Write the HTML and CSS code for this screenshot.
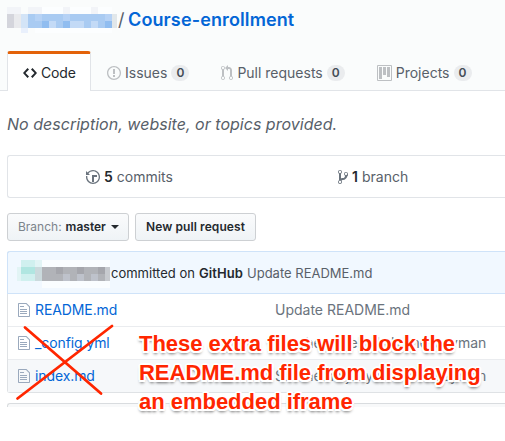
FILE: index.html
```html
<!DOCTYPE html>
<html lang="en">
<head>
<meta charset="utf-8">
<title>Course-enrollment</title>
<link rel="stylesheet" href="styles.css">
</head>
<body>
<header class="head">
  <h1 class="repo">
    <svg class="owner" width="110" height="28" shape-rendering="crispEdges">
      <path fill="#f2f4f8" d="M0 0h14v7H0zM21 0h14v7H21zM56 0h7v7h-7zM84 0h7v7h-7zM14 21h7v5h-7z"/>
      <path fill="#fcfeff" d="M35 0h21v7H35zM63 0h21v7H63zM91 0h14v7H91zM28 21h77v5H28z"/>
      <path fill="#d4d5dc" d="M0 7h7v14H0z"/><path fill="#e9eaed" d="M7 7h7v14H7z"/>
      <path fill="#d3e4f7" d="M14 7h7v14h-7z"/><path fill="#a9cbf2" d="M21 7h84v14H21z"/>
      <path fill="#90bdf0" d="M35 14h7v7h-7zM56 14h7v7h-7zM98 14h7v7h-7z"/>
      <path fill="#c3daf6" d="M42 14h7v7h-7zM63 14h14v7H63zM84 14h7v7h-7z"/>
      <path fill="#b6d2f5" d="M28 7h7v7h-7zM56 7h7v7h-7zM98 7h7v7h-7z"/>
      <path fill="#e1e7ea" d="M105 7h5v14h-5z"/><path fill="#e9f0fc" d="M14 21h7v5h-7z"/>
    </svg>
    <span class="slash">/</span><a class="name">Course-enrollment</a>
  </h1>
  <nav class="tabs">
    <a class="tab on"><svg width="14" height="16" viewBox="0 0 14 16"><path fill="#24292e" d="M9.5 3L8 4.5 11.5 8 8 11.5 9.5 13 14 8 9.500 3zm-5 0L0 8l4.500 5L6 11.500 2.500 8 6 4.500 4.500 3z"/></svg><span class="t-code">Code</span></a>
    <a class="tab issues"><svg width="14" height="16" viewBox="0 0 14 16"><path fill="#bdc0c3" fill-rule="evenodd" d="M7 2.300c3.140 0 5.700 2.560 5.700 5.700s-2.560 5.700-5.700 5.700A5.710 5.710 0 0 1 1.300 8c0-3.140 2.560-5.700 5.700-5.700zM7 1C3.140 1 0 4.140 0 8s3.140 7 7 7 7-3.140 7-7-3.140-7-7-7zm1 3H6v5h2V4zm0 6H6v2h2v-2z"/></svg><span class="t-issues">Issues</span><b class="count">0</b></a>
    <a class="tab pulls"><svg width="12" height="16" viewBox="0 0 12 16"><path fill="#bdc0c3" fill-rule="evenodd" d="M11 11.280V5c-.030-.780-.340-1.470-.940-2.060C9.460 2.350 8.780 2.030 8 2H7V0L4 3l3 3V4h1c.270.020.480.110.690.310.210.200.300.420.310.690v6.280A1.993 1.993 0 0 0 10 15a1.993 1.993 0 0 0 1-3.720zm-1 2.920c-.660 0-1.200-.550-1.200-1.200 0-.650.550-1.200 1.200-1.200.650 0 1.200.550 1.200 1.200 0 .650-.550 1.200-1.200 1.200zM4 3c0-1.110-.890-2-2-2a1.993 1.993 0 0 0-1 3.720v6.560A1.993 1.993 0 0 0 2 15a1.993 1.993 0 0 0 1-3.720V4.720c.590-.340 1-.980 1-1.720zm-.800 10c0 .660-.550 1.200-1.200 1.200-.650 0-1.200-.550-1.200-1.200 0-.650.550-1.200 1.200-1.200.650 0 1.200.550 1.200 1.200zM2 4.200C1.340 4.200.800 3.650.800 3c0-.650.550-1.200 1.200-1.200.650 0 1.200.550 1.200 1.200 0 .650-.550 1.200-1.200 1.200z"/></svg><span class="t-pulls">Pull requests</span><b class="count">0</b></a>
    <a class="tab projects"><svg width="15" height="16" viewBox="0 0 15 16"><path fill="#bdc0c3" fill-rule="evenodd" d="M10 12h3V2h-3v10zm-4-2h3V2H6v8zm-4 4h3V2H2v12zm-1 1h13V1H1v14zM14 0H1a1 1 0 0 0-1 1v14a1 1 0 0 0 1 1h13a1 1 0 0 0 1-1V1a1 1 0 0 0-1-1z"/></svg><span class="t-projects">Projects</span><b class="count">0</b></a>
  </nav>
</header>
<main class="main">
  <p class="desc"><span>No description, website, or topics provided.</span></p>
  <section class="summary">
    <div class="stat commits"><svg width="14" height="16" viewBox="0 0 14 16"><path fill="#6a737d" fill-rule="evenodd" d="M8 13H6V6h5v2H8v5zM7 1C4.810 1 2.870 2.020 1.590 3.590L0 2v4h4L2.500 4.500C3.550 3.170 5.170 2.300 7 2.300c3.140 0 5.700 2.560 5.700 5.700s-2.560 5.700-5.700 5.700A5.710 5.710 0 0 1 1.300 8c0-.340.030-.670.090-1H.080C.030 7.330 0 7.660 0 8c0 3.860 3.140 7 7 7s7-3.140 7-7-3.140-7-7-7z"/></svg><b>5</b><span class="t-commits">commits</span></div>
    <div class="stat branches"><svg width="10" height="16" viewBox="0 0 10 16"><path fill="#6a737d" fill-rule="evenodd" d="M10 5c0-1.110-.890-2-2-2a1.993 1.993 0 0 0-1 3.720v.300c-.020.520-.230.980-.630 1.380-.400.400-.860.610-1.380.630-.830.020-1.480.160-2 .450V4.720a1.993 1.993 0 0 0-1-3.720C.880 1 0 1.890 0 3a2 2 0 0 0 1 1.720v6.560c-.590.350-1 .990-1 1.720 0 1.110.890 2 2 2 1.110 0 2-.890 2-2 0-.530-.200-1-.530-1.360.090-.060.480-.410.590-.470.250-.110.560-.170.940-.170 1.050-.050 1.950-.450 2.750-1.250S8.950 8.770 9 7.730h-.020C9.590 7.370 10 6.730 10 6V5zM2 1.800c.660 0 1.200.550 1.200 1.200 0 .650-.550 1.200-1.200 1.200C1.350 4.200.800 3.650.800 3c0-.650.550-1.200 1.200-1.200zm0 12.410c-.660 0-1.200-.550-1.200-1.200 0-.650.550-1.200 1.200-1.200.650 0 1.200.550 1.200 1.200 0 .650-.550 1.200-1.200 1.200zm6-8c-.660 0-1.200-.550-1.200-1.200 0-.650.550-1.200 1.200-1.200.650 0 1.200.550 1.200 1.200 0 .650-.550 1.200-1.200 1.200z"/></svg><b>1</b><span class="t-branch">branch</span></div>
  </section>
  <div class="actions">
    <button class="btn branch"><span class="t-blabel">Branch:</span><b class="t-master">master</b><i class="caret"></i></button>
    <button class="btn"><b class="t-new">New pull request</b></button>
  </div>
  <section class="files">
    <div class="tease">
      <svg class="author" width="93" height="28" shape-rendering="crispEdges">
        <path fill="#fafdff" d="M25 0h68v28H25z"/><path fill="#e2f4f5" d="M0 7h25v14H0zM4 0h21v7H4z"/>
        <path fill="#d0f0ef" d="M4 0h14v21H4z"/><path fill="#b0e6e1" d="M4 7h14v7H4z"/><path fill="#cbdadd" d="M18 7h7v14h-7z"/>
        <path fill="#b1b3b8" d="M25 7h68v14H25z"/><path fill="#a5a6ac" d="M39 7h7v7h-7zM60 7h7v7h-7zM81 7h7v7h-7z"/>
        <path fill="#bec2cb" d="M46 14h7v7h-7zM60 14h7v7h-7zM74 14h7v7h-7z"/><path fill="#c7cacf" d="M88 7h5v14h-5z"/>
      </svg>
      <span class="t-committed">committed on</span><b class="t-github">GitHub</b><span class="t-tmsg">Update README.md</span>
    </div>
    <div class="row"><svg width="12" height="16" viewBox="0 0 12 16"><path fill="#9aa9bd" fill-rule="evenodd" d="M6 5H2V4h4v1zM2 8h7V7H2v1zm0 2h7V9H2v1zm0 2h7v-1H2v1zm10-7.500V14c0 .550-.450 1-1 1H1c-.550 0-1-.450-1-1V2c0-.550.450-1 1-1h7.500L12 4.500zM11 5L8 2H1v12h10V5z"/></svg><a class="file"><span class="t-readme">README.md</span></a><span class="t-update">Update README.md</span></div>
    <div class="row"><svg width="12" height="16" viewBox="0 0 12 16"><path fill="#9aa9bd" fill-rule="evenodd" d="M6 5H2V4h4v1zM2 8h7V7H2v1zm0 2h7V9H2v1zm0 2h7v-1H2v1zm10-7.500V14c0 .550-.450 1-1 1H1c-.550 0-1-.450-1-1V2c0-.550.450-1 1-1h7.500L12 4.500zM11 5L8 2H1v12h10V5z"/></svg><a class="file"><span class="t-config">_config.yml</span></a><span class="t-theme">Set theme jekyll-theme-cayman</span></div>
    <div class="row alt"><svg width="12" height="16" viewBox="0 0 12 16"><path fill="#9aa9bd" fill-rule="evenodd" d="M6 5H2V4h4v1zM2 8h7V7H2v1zm0 2h7V9H2v1zm0 2h7v-1H2v1zm10-7.500V14c0 .550-.450 1-1 1H1c-.550 0-1-.450-1-1V2c0-.550.450-1 1-1h7.500L12 4.500zM11 5L8 2H1v12h10V5z"/></svg><a class="file"><span class="t-index">index.md</span></a><span class="t-theme">Set theme jekyll-theme-cayman</span></div>
    <svg class="cross" width="100" height="76" viewBox="0 0 100 76"><path d="M9 4.500L85 70.500M1.500 75.500L96 3" transform="translate(1 -1)" fill="none" stroke="#ff2600" stroke-width="2.800" stroke-linecap="round"/></svg>
    <div class="note"><div class="n1">These extra files will block the</div><div class="n2">README.md file from displaying</div><div class="n3">an embedded iframe</div></div>
  </section>
  <div class="readme"></div>
</main>
</body>
</html>
```
FILE: styles.css
```css
* { box-sizing: border-box; }
body { margin: 0; height: 441px; overflow: hidden; background: #fff; color: #24292e; font: 14px/20px Inter, "Liberation Sans", sans-serif; }
svg { flex: none; display: block; }
span, b, a { white-space: nowrap; }
b { font-weight: 600; }

.head { height: 91px; background: #fafcfc; border-bottom: 1px solid #e1e4e8; padding-left: 7px; display: flex; flex-direction: column; justify-content: space-between; }
.repo { margin: 0; padding-top: 7px; display: flex; font-size: 18px; line-height: 26px; font-weight: 400; }
.slash { color: #586069; margin-left: 1px; width: 10px; }
.name { color: #0366d6; font-weight: 600; letter-spacing: .12px; }
.tabs { display: flex; height: 40px; margin-bottom: -1px; color: #586069; }
.tab { display: flex; align-items: center; padding-top: 3px; }
.tab.on { width: 84px; padding: 0 0 0 15px; color: #24292e; background: #fff; border: 1px solid #e1e4e8; border-top: 3px solid #e36209; border-bottom: 0; border-radius: 3px 3px 0 0; }
.tab span { margin-left: 4px; }
.tab.on span { letter-spacing: -.15px; }
.issues { margin-left: 16px; }
.pulls { margin-left: 32px; }
.projects { margin-left: 32px; }
.count { margin-left: 4px; width: 18px; height: 16px; border-radius: 8px; background: #eaecee; color: #444d56; font-size: 12px; line-height: 16px; text-align: center; }

.main { padding-left: 7px; }
.desc { margin: 0; padding-top: 21px; height: 64px; font-size: 16px; line-height: 24px; font-style: italic; letter-spacing: .02px; color: #586069; }
.summary { height: 43px; border: 1px solid #e1e4e8; border-right: 0; border-radius: 3px 0 0 3px; display: flex; align-items: center; color: #586069; }
.stat { display: flex; align-items: center; }
.stat b { color: #24292e; margin: 0 4px; }
.commits { margin-left: 78px; width: 252px; }
.actions { display: flex; gap: 6px; padding-top: 15px; height: 53px; }
.btn { display: flex; align-items: center; height: 28px; width: 121px; padding: 0 0 0 10px; border: 1px solid #cdd0d3; border-radius: 3px; background: linear-gradient(#fafbfc, #eff3f6); color: #24292e; font: 12px/20px Inter, sans-serif; }
.branch { width: 122px; }
.t-blabel { color: #7d848b; margin-right: 4px; }
.t-new { letter-spacing: .09px; }
.caret { margin-left: 5px; border: 4px solid transparent; border-top-color: #24292e; border-bottom: 0; }

.files { position: relative; border: 1px solid #dfe2e5; border-top: 0; border-right: 0; border-radius: 3px 0 0 3px; height: 142px; }
.tease { height: 43px; margin-left: -1px; padding-left: 9px; background: #f1f8ff; border: 1px solid #cfe3f9; border-right: 0; border-radius: 3px 0 0 0; display: flex; align-items: center; font-size: 13px; }
.author { margin-right: 1px; margin-top: 2px; }
.t-github { margin: 0 4px; letter-spacing: .1px; }
.t-tmsg { color: #586069; }
.row { height: 33px; padding-left: 10px; display: flex; align-items: center; border-top: 1px solid #eaecef; color: #6a737d; }
.tease + .row { border-top: 0; height: 32px; }
.alt { background: #f6f8fa; }
.file { width: 240px; margin-left: 5px; color: #0366d6; letter-spacing: -.1px; }
.cross { position: absolute; left: 7px; top: 73px; overflow: visible; }
.note { position: absolute; left: 131px; top: 78px; color: #ff2600; font: bold 22px/29px "Liberation Sans", Arial, sans-serif; letter-spacing: -.02px; white-space: nowrap; text-shadow: -2px 0 #fff, 2px 0 #fff, 0 -2px #fff, 0 2px #fff, 1.500px 1.500px #fff, -1.500px 1.500px #fff, 1.500px -1.500px #fff, -1.500px -1.500px #fff, 0 3px 3px #0009; }
.note div { width: max-content; }
.readme { margin-top: 10px; height: 4px; border: 1px solid #d9dcdf; border-right: 0; border-bottom: 0; border-radius: 3px 0 0 0; background: #f8f9fa; }
```
